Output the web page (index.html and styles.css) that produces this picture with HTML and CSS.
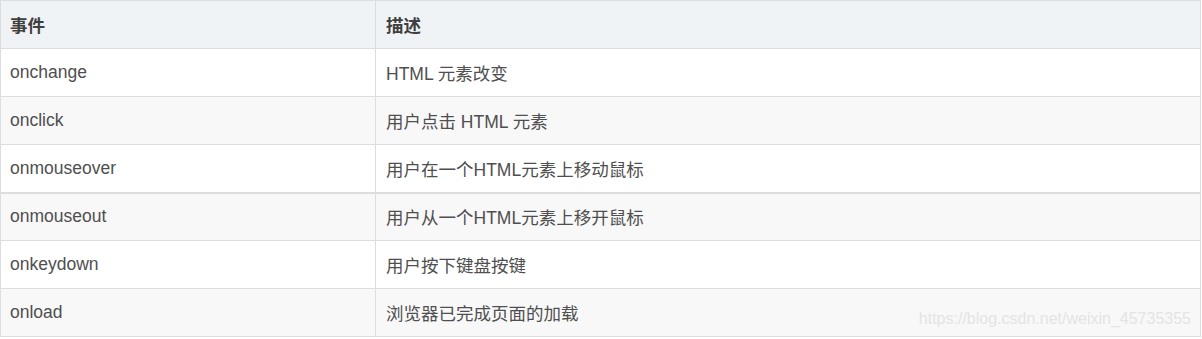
FILE: index.html
```html
<!DOCTYPE html>
<html lang="zh">
<head>
<meta charset="utf-8">
<link rel="stylesheet" href="styles.css">
</head>
<body>
<div class="wrap">
<table class="tbl">
  <thead>
    <tr><th class="c1">事件</th><th>描述</th></tr>
  </thead>
  <tbody>
    <tr><td class="c1">onchange</td><td>HTML 元素改变</td></tr>
    <tr class="alt"><td class="c1">onclick</td><td>用户点击 HTML 元素</td></tr>
    <tr class="thick"><td class="c1">onmouseover</td><td>用户在一个HTML元素上移动鼠标</td></tr>
    <tr class="alt"><td class="c1">onmouseout</td><td>用户从一个HTML元素上移开鼠标</td></tr>
    <tr><td class="c1">onkeydown</td><td>用户按下键盘按键</td></tr>
    <tr class="alt"><td class="c1">onload</td><td>浏览器已完成页面的加载</td></tr>
  </tbody>
</table>
<div class="watermark">https://blog.csdn.net/weixin_45735355</div>
</div>
</body>
</html>
```
FILE: styles.css
```css
html, body {
  margin: 0;
  padding: 0;
  background: #ffffff;
}
.wrap {
  position: relative;
  width: 1201px;
}
.tbl {
  border-collapse: collapse;
  width: 1201px;
  font-family: "Liberation Sans", Arial, "Noto Sans CJK SC", sans-serif;
  font-size: 17.5px;
  color: #4f4f4f;
}
.tbl th, .tbl td {
  border: 1px solid #dddddd;
  height: 48px;
  padding: 0 10px;
  text-align: left;
  vertical-align: middle;
  box-sizing: border-box;
}
.tbl th {
  background: #eff3f5;
  font-weight: bold;
  color: #3f3f3f;
}
.tbl .c1 {
  width: 375px;
  padding-left: 9px;
}
.tbl tr.alt td {
  background: #f8f8f8;
}
.tbl tr.thick td {
  border-bottom: 2px solid #dddddd;
}
.watermark {
  position: absolute;
  right: 10px;
  top: 310px;
  font-family: "Liberation Sans", Arial, sans-serif;
  font-size: 16px;
  color: #e4e4e4;
}
```
